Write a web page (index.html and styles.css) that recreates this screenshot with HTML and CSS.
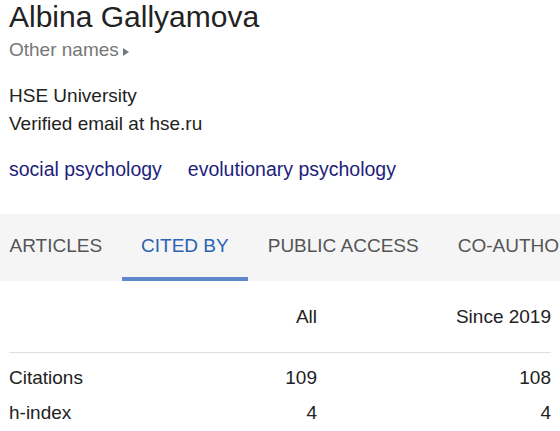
FILE: index.html
```html
<!DOCTYPE html>
<html lang="en">
<head>
    <meta charset="UTF-8">
    <title>Albina Gallyamova</title>
    <link rel="stylesheet" href="styles.css">
</head>
<body>
    <header class="profile">
        <h1 class="name">Albina Gallyamova</h1>
        <div class="other-names">Other names <span class="caret"></span></div>
        <div class="affil first">HSE University</div>
        <div class="affil">Verified email at hse.ru</div>
        <div class="topics">
            <a href="#">social psychology</a>
            <a href="#">evolutionary psychology</a>
        </div>
    </header>

    <nav class="tabs">
        <a href="#" class="tab">ARTICLES</a>
        <a href="#" class="tab active">CITED BY</a>
        <a href="#" class="tab">PUBLIC ACCESS</a>
        <a href="#" class="tab">CO-AUTHORS</a>
    </nav>

    <section class="stats">
        <div class="row head">
            <span></span>
            <span class="num">All</span>
            <span class="num">Since 2019</span>
        </div>
        <div class="row">
            <span>Citations</span>
            <span class="num">109</span>
            <span class="num">108</span>
        </div>
        <div class="row">
            <span>h-index</span>
            <span class="num">4</span>
            <span class="num">4</span>
        </div>
    </section>
</body>
</html>
```

FILE: styles.css
```css
body {
    margin: 0;
    padding: 0;
    background: #fff;
    font-family: "Liberation Sans", Arial, sans-serif;
    color: #222;
    overflow: hidden;
}
.profile {
    padding: 0 9px;
}
.name {
    font-size: 30px;
    font-weight: normal;
    margin: 0;
    line-height: 34px;
}
.other-names {
    color: #777;
    font-size: 19px;
    line-height: 32px;
}
.caret {
    display: inline-block;
    width: 0;
    height: 0;
    border-top: 4px solid transparent;
    border-bottom: 4px solid transparent;
    border-left: 6px solid #777;
    margin-left: -1px;
}
.affil {
    font-size: 19px;
    line-height: 28px;
}
.affil.first {
    margin-top: 16px;
}
.topics {
    margin-top: 17px;
    font-size: 19.5px;
    line-height: 28px;
    display: flex;
    gap: 26px;
}
.topics a {
    color: #1e1e7c;
    text-decoration: none;
}
.tabs {
    margin-top: 31px;
    background: #f5f5f5;
    height: 67px;
    display: flex;
    white-space: nowrap;
    overflow: hidden;
}
.tab {
    color: #555;
    text-decoration: none;
    font-size: 19px;
    padding: 0 19.5px;
    line-height: 63px;
    border-bottom: 4px solid transparent;
}
.tab:first-child {
    margin-left: -10px;
}
.tab.active {
    color: #2a62b5;
    border-bottom-color: #5f87cc;
}
.stats {
    padding: 0 9px;
    font-size: 19px;
}
.row {
    display: grid;
    grid-template-columns: 1fr 120px 234px;
    line-height: 35px;
}
.row.head {
    line-height: 71px;
    border-bottom: 1px solid #dedede;
    margin-bottom: 7px;
}
.num {
    text-align: right;
}
```
